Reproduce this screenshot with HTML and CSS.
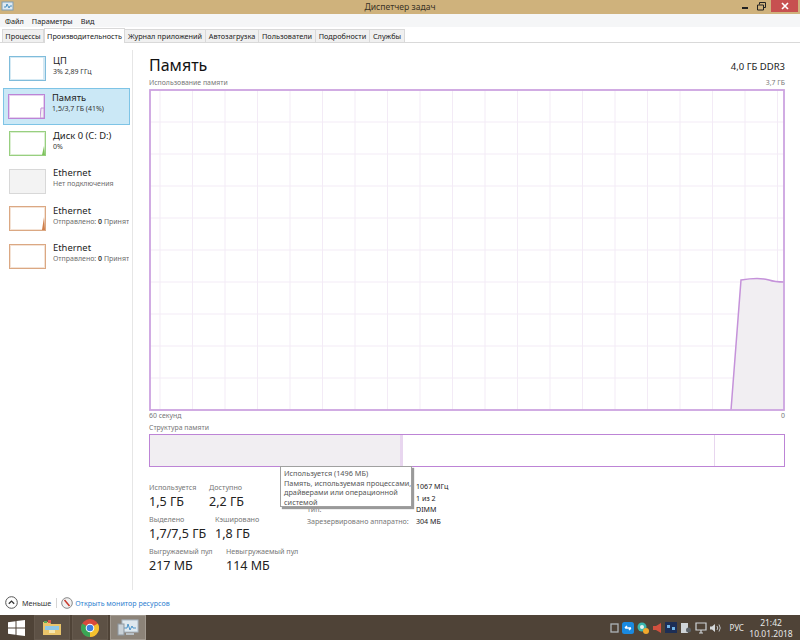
FILE: index.html
```html
<!DOCTYPE html>
<html lang="ru">
  <head>
    <meta charset="UTF-8" />
    <title>Диспетчер задач</title>
    <link rel="stylesheet" href="styles.css">
  </head>
  <body>
    <div class="window">
      <div class="titlebar">
        <svg class="app-icon" width="14" height="12" viewBox="0 0 14 12">
          <rect x="1" y="1" width="11" height="8" fill="#dfeaf2" stroke="#7f9db5" />
          <path d="M3 6h2l1-3 2 4 1-2h2" fill="none" stroke="#4a90c0" />
        </svg>
        <span class="title">Диспетчер задач</span>
        <div class="win-btns">
          <span class="win-btn">
            <svg width="8" height="8" viewBox="0 0 8 8"><rect x="1" y="5" width="6" height="2" fill="#222" /></svg>
          </span>
          <span class="win-btn">
            <svg width="9" height="9" viewBox="0 0 9 9"><path d="M2.5 2.5V.5h6v5h-2M.5 3h6v5h-6z" fill="none" stroke="#222" /></svg>
          </span>
          <span class="win-close">
            <svg width="8" height="8" viewBox="0 0 8 8"><path d="M1 1l6 6M7 1L1 7" stroke="#fff" stroke-width="1.6" /></svg>
          </span>
        </div>
      </div>

      <div class="menubar">
        <span>Файл</span>
        <span>Параметры</span>
        <span>Вид</span>
      </div>

      <div class="tabs">
        <span class="tab tab-1">Процессы</span>
        <span class="tab tab-2 active">Производительность</span>
        <span class="tab tab-3">Журнал приложений</span>
        <span class="tab tab-4">Автозагрузка</span>
        <span class="tab tab-5">Пользователи</span>
        <span class="tab tab-6">Подробности</span>
        <span class="tab tab-7">Службы</span>
      </div>

      <div class="content">
        <div class="sidebar">
          <div class="item">
            <div class="thumb thumb-cpu">
              <svg class="spark" width="3" height="23" viewBox="0 0 3 23"><rect x="1" width="2" height="23" fill="#d4e8f3" /></svg>
            </div>
            <div class="item-text">
              <div class="item-name">ЦП</div>
              <div class="item-sub dark">3% 2,89 ГГц</div>
            </div>
          </div>
          <div class="item selected">
            <div class="thumb thumb-mem">
              <svg class="spark" width="4" height="23" viewBox="0 0 4 23"><path d="M0 23L1 13h3v10z" fill="#f2eff3" stroke="#c592da" /></svg>
            </div>
            <div class="item-text">
              <div class="item-name">Память</div>
              <div class="item-sub dark">1,5/3,7 ГБ (41%)</div>
            </div>
          </div>
          <div class="item">
            <div class="thumb thumb-disk">
              <svg class="spark" width="3" height="23" viewBox="0 0 3 23"><path d="M0 23L2 14l1 9z" fill="#7cc25a" /></svg>
            </div>
            <div class="item-text">
              <div class="item-name">Диск 0 (C: D:)</div>
              <div class="item-sub dark">0%</div>
            </div>
          </div>
          <div class="item">
            <div class="thumb thumb-off"></div>
            <div class="item-text">
              <div class="item-name">Ethernet</div>
              <div class="item-sub">Нет подключения</div>
            </div>
          </div>
          <div class="item">
            <div class="thumb thumb-net">
              <svg class="spark" width="3" height="23" viewBox="0 0 3 23"><path d="M0 23L2 10l1 13z" fill="#cf7f4b" /></svg>
            </div>
            <div class="item-text">
              <div class="item-name">Ethernet</div>
              <div class="item-sub">Отправлено: <b>0</b> Принят</div>
            </div>
          </div>
          <div class="item">
            <div class="thumb thumb-net"></div>
            <div class="item-text">
              <div class="item-name">Ethernet</div>
              <div class="item-sub">Отправлено: <b>0</b> Принят</div>
            </div>
          </div>
        </div>

        <div class="main">
          <div class="main-head">
            <h1>Память</h1>
            <span class="capacity">4,0 ГБ DDR3</span>
          </div>
          <div class="chart-labels">
            <span>Использование памяти</span>
            <span>3,7 ГБ</span>
          </div>
          <svg class="chart" width="636" height="322" viewBox="0 0 636 322">
            <path class="grid" d="M11 1V321M43.500 1V321M76 1V321M108.500 1V321M141 1V321M173.500 1V321M206 1V321M238.500 1V321M271 1V321M303.500 1V321M336 1V321M368.500 1V321M401 1V321M433.500 1V321M466 1V321M498.500 1V321M531 1V321M563.500 1V321M596 1V321M628.500 1V321" />
            <path class="grid" d="M1 33H635M1 65H635M1 97H635M1 129H635M1 161H635M1 193H635M1 225H635M1 257H635M1 289H635" />
            <path class="area" d="M582 321L592 191Q610 188 620 191Q626 193 635 193V321z" />
            <path class="line" d="M582 321L592 191Q610 188 620 191Q626 193 635 193" />
            <rect class="frame" x="1" y="1" width="634" height="320" />
          </svg>
          <div class="chart-labels under">
            <span>60 секунд</span>
            <span>0</span>
          </div>
          <div class="struct-label">Структура памяти</div>
          <div class="struct">
            <div class="seg-used"></div>
            <div class="seg-mod"></div>
            <div class="seg-standby"></div>
            <div class="seg-free"></div>
          </div>

          <div class="details">
            <div class="stats">
              <div class="stat-row">
                <div class="stat stat-a"><div class="stat-label">Используется</div><div class="stat-value">1,5 ГБ</div></div>
                <div class="stat"><div class="stat-label">Доступно</div><div class="stat-value">2,2 ГБ</div></div>
              </div>
              <div class="stat-row">
                <div class="stat stat-b"><div class="stat-label">Выделено</div><div class="stat-value">1,7/7,5 ГБ</div></div>
                <div class="stat"><div class="stat-label">Кэшировано</div><div class="stat-value">1,8 ГБ</div></div>
              </div>
              <div class="stat-row">
                <div class="stat stat-c"><div class="stat-label">Выгружаемый пул</div><div class="stat-value">217 МБ</div></div>
                <div class="stat"><div class="stat-label">Невыгружаемый пул</div><div class="stat-value">114 МБ</div></div>
              </div>
            </div>
            <div class="specs">
              <div class="spec spec-hidden"><b>1067 МГц</b></div>
              <div class="spec spec-hidden"><b>1 из 2</b></div>
              <div class="spec"><span>Тип:</span><b>DIMM</b></div>
              <div class="spec"><span>Зарезервировано аппаратно:</span><b>304 МБ</b></div>
            </div>
          </div>

          <div class="tooltip">
            Используется (1496 МБ)<br>
            Память, используемая процессами,<br>
            драйверами или операционной<br>
            системой
          </div>
        </div>
      </div>

      <div class="footer">
        <svg width="13" height="13" viewBox="0 0 13 13">
          <circle cx="6.500" cy="6.500" r="5.800" fill="#fff" stroke="#555" />
          <path d="M3.800 7.800l2.700-2.700 2.700 2.700" fill="none" stroke="#333" stroke-width="1.300" />
        </svg>
        <span class="less">Меньше</span>
        <span class="sep"></span>
        <svg width="12" height="12" viewBox="0 0 12 12">
          <circle cx="6" cy="6" r="5.300" fill="#f1f1f1" stroke="#888" />
          <path d="M3.500 3L8.500 9" stroke="#c83a2c" stroke-width="1.500" />
        </svg>
        <span class="link">Открыть монитор ресурсов</span>
      </div>
    </div>

    <div class="taskbar">
      <span class="start">
        <svg width="17" height="16" viewBox="0 0 17 16">
          <path d="M0 2.300L7.500 1.200V7.500H0zM8.500 1L17 0V7.500H8.500zM0 8.500H7.500V14.800L0 13.700zM8.500 8.500H17V16L8.500 15z" fill="#fff" />
        </svg>
      </span>
      <span class="task">
        <svg width="20" height="18" viewBox="0 0 20 18">
          <path d="M1 3h7l1 2h10v11H1z" fill="#e9c46a" />
          <rect x="2" y="2" width="3" height="2" fill="#5aa85a" />
          <rect x="6" y="1" width="3" height="3" fill="#d9574a" />
          <rect x="3" y="7" width="14" height="4" fill="#8ec7e8" />
          <rect x="7" y="11" width="6" height="3" fill="#f6e7b0" />
        </svg>
      </span>
      <span class="task">
        <svg width="18" height="18" viewBox="0 0 18 18">
          <circle cx="9" cy="9" r="9" fill="#d8493c" />
          <path d="M9 9L1.200 4.500A9 9 0 0 0 9 18z" fill="#3aa655" />
          <path d="M9 9V18A9 9 0 0 0 16.800 4.500z" fill="#f3c12e" />
          <circle cx="9" cy="9" r="4.300" fill="#fff" />
          <circle cx="9" cy="9" r="3.300" fill="#3f80e0" />
        </svg>
      </span>
      <span class="task active-task">
        <svg width="22" height="18" viewBox="0 0 22 18">
          <rect x="5" y="1" width="16" height="12" fill="#dfe8ee" stroke="#a9b8c4" />
          <path d="M7 9h3l1-4 2 6 2-4 1 2h3" fill="none" stroke="#4c94c9" />
          <rect x="1" y="5" width="6" height="11" fill="#c9d1d7" stroke="#8d979f" />
          <rect x="9" y="14" width="8" height="2" fill="#b8c0c6" />
        </svg>
      </span>
      <div class="tray">
        <svg width="9" height="10" viewBox="0 0 9 10"><rect x="1" y="1" width="7" height="8" fill="none" stroke="#aeb4b8" stroke-width="1.300" /></svg>
        <svg width="12" height="12" viewBox="0 0 12 12"><rect width="12" height="12" rx="2.500" fill="#1a8ae0" /><path d="M3 6h6M3 6l2-2M9 6L7 8" stroke="#fff" stroke-width="1.500" fill="none" /></svg>
        <svg width="12" height="12" viewBox="0 0 12 12"><circle cx="5" cy="5" r="4.500" fill="#39b6b0" /><circle cx="5" cy="5" r="2" fill="#e8f4f4" /><circle cx="9" cy="9" r="3" fill="#f0a92c" /></svg>
        <svg width="10" height="12" viewBox="0 0 10 12"><path d="M9 1v10L4 8H1V4h3z" fill="#d2503e" /></svg>
        <svg width="12" height="11" viewBox="0 0 12 11"><rect width="12" height="11" fill="#1d2e55" /><path d="M2 3h3v3H2zM7 5h3v3H7z" fill="#6fb4e8" /></svg>
        <svg width="12" height="12" viewBox="0 0 12 12"><path d="M1 1h7v10H1z" fill="#cfd4d8" /><circle cx="8.500" cy="8" r="2.500" fill="#5c6268" /></svg>
        <svg width="12" height="12" viewBox="0 0 12 12"><path d="M1 1h10v7H1zM4 11h4M6 8v3" fill="none" stroke="#cfd4d8" stroke-width="1.200" /></svg>
        <svg width="11" height="10" viewBox="0 0 11 10"><path d="M0 3.500h2L5 1v8L2 6.500H0z" fill="#d5d8da" /><path d="M7 3q1.500 2 0 4M9 1.500q2.500 3.500 0 7" fill="none" stroke="#bfc3c6" /></svg>
        <span class="lang">РУС</span>
        <div class="clock">
          <div>21:42</div>
          <div>10.01.2018</div>
        </div>
      </div>
    </div>
  </body>
</html>
```

FILE: styles.css
```css
* {
  box-sizing: border-box;
}
html, body {
  margin: 0;
  height: 640px;
  overflow: hidden;
}
body {
  font-family: "Noto Sans", "Open Sans", sans-serif;
  font-size: 7.300px;
  color: #222;
  background: #fff;
  display: flex;
  flex-direction: column;
}
.window {
  height: 615px;
  display: flex;
  flex-direction: column;
}

.titlebar {
  height: 14px;
  background: #cfb27c;
  display: flex;
  align-items: center;
  position: relative;
  padding-left: 1px;
}
.app-icon {
  flex: none;
}
.title {
  position: absolute;
  left: 0;
  right: 0;
  text-align: center;
  font-size: 8.600px;
  color: #3a3226;
}
.win-btns {
  margin-left: auto;
  margin-right: 2px;
  display: flex;
  align-items: flex-start;
  height: 14px;
  position: relative;
}
.win-btn {
  width: 17px;
  height: 12px;
  display: flex;
  align-items: center;
  justify-content: center;
}
.win-close {
  width: 27px;
  height: 12px;
  background: #c75050;
  display: flex;
  align-items: center;
  justify-content: center;
  margin-left: 1px;
}

.menubar {
  height: 13px;
  background: #f5f6f7;
  display: flex;
  align-items: center;
  gap: 8px;
  padding-left: 5px;
}
.tabs {
  height: 16px;
  padding: 1px 0 0 2px;
  display: flex;
  align-items: flex-end;
  border-bottom: 1px solid #d9d9d9;
  background: #fff;
}
.tab {
  height: 13px;
  background: #f0f0f0;
  border: 1px solid #d9d9d9;
  border-bottom: none;
  border-left: none;
  display: flex;
  align-items: center;
  justify-content: center;
  white-space: nowrap;
  font-size: 7.300px;
}
.tab-1 { width: 42px; border-left: 1px solid #d9d9d9; }
.tab-2 { width: 81px; }
.tab-3 { width: 81px; }
.tab-4 { width: 53px; }
.tab-5 { width: 57px; }
.tab-6 { width: 54px; }
.tab-7 { width: 35px; }
.tab.active {
  height: 15px;
  background: #fff;
  border-left: 1px solid #d9d9d9;
  margin-bottom: -1px;
  position: relative;
}

.content {
  flex: 1;
  display: flex;
  min-height: 0;
}
.sidebar {
  width: 133px;
  flex: none;
  margin-top: 7px;
  padding: 0 2px 0 3px;
  border-right: 1px solid #e6e6e6;
}
.item {
  height: 37.500px;
  display: flex;
  align-items: center;
  padding-left: 6px;
  border: 1px solid transparent;
  white-space: nowrap;
  overflow: hidden;
}
.item.selected {
  background: #cbe8f6;
  border-color: #7ec4e6;
  padding-left: 5px;
}
.thumb {
  width: 37px;
  height: 25px;
  border: 1px solid #999;
  background: #fff;
  position: relative;
  flex: none;
  margin-left: -1px;
}
.spark {
  position: absolute;
  right: 0;
  bottom: 0;
}
.thumb-cpu { border-color: #7fbcdb; box-shadow: inset 0 0 0 1px #d6eaf4; }
.thumb-mem { border-color: #bd84d6; box-shadow: inset 0 0 0 1px #e6d2ef; }
.thumb-disk { border-color: #98cf80; box-shadow: inset 0 0 0 1px #dcefd3; }
.thumb-off { border-color: #d8d8d8; background: #f3f3f3; }
.thumb-net { border-color: #dba883; box-shadow: inset 0 0 0 1px #f4e3d6; }
.item-text {
  margin-left: 7px;
  padding-bottom: 6px;
}
.item-name {
  font-size: 9.400px;
  line-height: 12px;
  color: #222;
}
.item-sub {
  font-size: 7px;
  line-height: 10px;
  color: #6d6d6d;
}
.item-sub.dark {
  color: #333;
}
.item-sub b {
  font-weight: 600;
  color: #333;
}

.main {
  flex: 1;
  padding: 0 15px 0 16px;
  position: relative;
}
.main-head {
  display: flex;
  justify-content: space-between;
  align-items: flex-end;
  height: 34px;
}
h1 {
  margin: 0;
  font-weight: 400;
  font-size: 16px;
  line-height: 24px;
  color: #111;
}
.capacity {
  font-size: 9.500px;
  line-height: 17px;
  margin-bottom: 2px;
  color: #222;
}
.chart-labels {
  display: flex;
  justify-content: space-between;
  font-size: 6.900px;
  line-height: 12px;
  color: #777;
}
.chart {
  display: block;
}
.grid {
  stroke: #f3ebf6;
  stroke-width: 1;
  fill: none;
}
.frame {
  fill: none;
  stroke: #cda3e0;
  stroke-width: 1.800;
}
.area {
  fill: #f1eef2;
}
.line {
  fill: none;
  stroke: #c592da;
  stroke-width: 1.500;
}
.under {
  height: 11px;
  margin-top: -1px;
}
.struct-label {
  font-size: 6.900px;
  line-height: 11px;
  color: #777;
  margin-top: 1px;
}
.struct {
  height: 33px;
  margin-top: 1px;
  border: 1px solid #bd84d6;
  display: flex;
}
.seg-used {
  width: 250px;
  background: #f1eef2;
}
.seg-mod {
  width: 3px;
  background: #e8d6ef;
}
.seg-standby {
  width: 312px;
  border-right: 1px solid #e8d6ef;
}
.seg-free {
  flex: 1;
}

.details {
  display: flex;
  margin-top: 15px;
}
.stats {
  width: 158px;
  flex: none;
}
.stat-row {
  display: flex;
  height: 32px;
}
.stat-a { width: 60px; }
.stat-b { width: 66px; }
.stat-c { width: 77px; }
.stat-label {
  font-size: 7.200px;
  line-height: 11px;
  color: #777;
  white-space: nowrap;
}
.stat-value {
  font-size: 12.500px;
  line-height: 17px;
  color: #222;
  white-space: nowrap;
}
.specs {
  margin-top: -1px;
}
.spec {
  display: flex;
  height: 11.500px;
  line-height: 11px;
  font-size: 7.100px;
  color: #777;
  white-space: nowrap;
}
.spec span {
  width: 109px;
}
.spec-hidden {
  padding-left: 109px;
}
.spec b {
  font-weight: 400;
  color: #222;
}
.tooltip {
  position: absolute;
  left: 147px;
  top: 423px;
  width: 132px;
  height: 41px;
  padding: 2px 3px;
  background: #fff;
  border: 1px solid #a0a0a0;
  box-shadow: 2px 2px 1px #9a9a9a;
  font-size: 7.300px;
  line-height: 9.500px;
  color: #555;
  white-space: nowrap;
}

.footer {
  height: 25px;
  flex: none;
  display: flex;
  align-items: center;
  padding-left: 5px;
  margin-top: auto;
  background: #fff;
}
.less {
  margin-left: 4px;
  color: #333;
  font-size: 7.200px;
}
.sep {
  width: 1px;
  height: 10px;
  background: #d5d5d5;
  margin: 0 4px 0 5px;
}
.link {
  margin-left: 2px;
  color: #2f7fd0;
  font-size: 7.100px;
}

.taskbar {
  height: 25px;
  flex: none;
  background: #4f4337;
  display: flex;
  align-items: center;
  gap: 2px;
}
.start {
  width: 32px;
  height: 25px;
  display: flex;
  align-items: center;
  justify-content: center;
}
.task {
  width: 36px;
  height: 25px;
  background: #5d5145;
  border: 1px solid #65594d;
  display: flex;
  align-items: center;
  justify-content: center;
}
.active-task {
  background: #8c8378;
  border-color: #a29a90;
}
.tray {
  margin-left: auto;
  display: flex;
  align-items: center;
  gap: 3px;
  padding-right: 4px;
}
.lang {
  color: #e8e8e8;
  font-size: 8px;
  margin-left: 6px;
  margin-right: -1px;
}
.clock {
  width: 50px;
  text-align: center;
  color: #e8e8e8;
  font-size: 8.500px;
  line-height: 11px;
}
```
